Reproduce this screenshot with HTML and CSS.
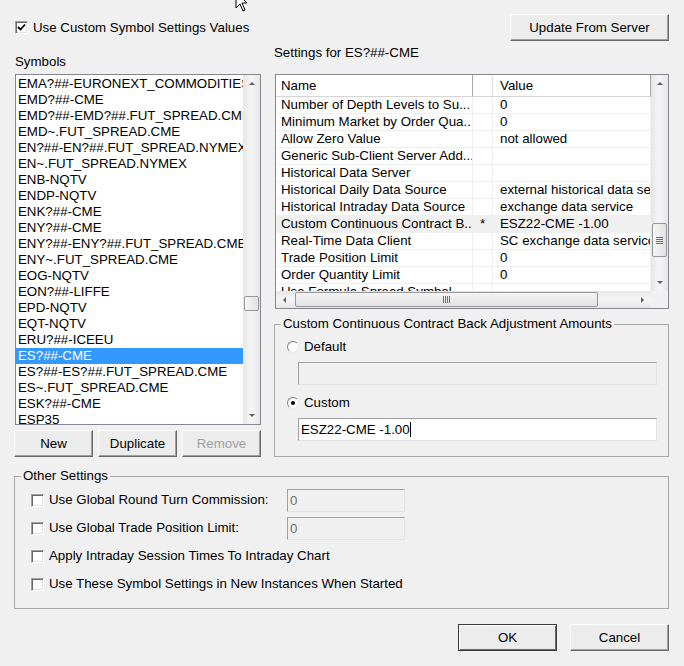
FILE: index.html
```html
<!DOCTYPE html>
<html lang="en">
<head>
    <meta charset="UTF-8">
    <title>Symbol Settings</title>
    <link rel="stylesheet" href="styles.css">
</head>
<body>
    <div class="dialog">
        <svg class="cursor" width="14" height="22" viewBox="0 0 14 22">
            <path d="M1 1 L1 17 L5 13 L8 20 L10 19 L7 12 L12 12 Z" fill="#fff" stroke="#000" stroke-width="1"/>
        </svg>

        <div class="top-row">
            <label class="check">
                <span class="box checked">
                    <svg width="9" height="9" viewBox="0 0 9 9"><path d="M1 4 L3.5 6.5 L8 1.5" fill="none" stroke="#000" stroke-width="1.8"/></svg>
                </span>
                Use Custom Symbol Settings Values
            </label>
            <button class="btn btn-update">Update From Server</button>
        </div>

        <div class="main">
            <div class="left-col">
                <div class="caption caption-symbols">Symbols</div>
                <div class="listbox">
                    <ul class="items">
                        <li>EMA?##-EURONEXT_COMMODITIES</li>
                        <li>EMD?##-CME</li>
                        <li>EMD?##-EMD?##.FUT_SPREAD.CME</li>
                        <li>EMD~.FUT_SPREAD.CME</li>
                        <li>EN?##-EN?##.FUT_SPREAD.NYMEX</li>
                        <li>EN~.FUT_SPREAD.NYMEX</li>
                        <li>ENB-NQTV</li>
                        <li>ENDP-NQTV</li>
                        <li>ENK?##-CME</li>
                        <li>ENY?##-CME</li>
                        <li>ENY?##-ENY?##.FUT_SPREAD.CME</li>
                        <li>ENY~.FUT_SPREAD.CME</li>
                        <li>EOG-NQTV</li>
                        <li>EON?##-LIFFE</li>
                        <li>EPD-NQTV</li>
                        <li>EQT-NQTV</li>
                        <li>ERU?##-ICEEU</li>
                        <li class="selected">ES?##-CME</li>
                        <li>ES?##-ES?##.FUT_SPREAD.CME</li>
                        <li>ES~.FUT_SPREAD.CME</li>
                        <li>ESK?##-CME</li>
                        <li>ESP35</li>
                    </ul>
                    <div class="vscroll">
                        <div class="sb-btn"><span class="arr-up"></span></div>
                        <div class="sb-track">
                            <div class="thumb thumb-list"></div>
                        </div>
                        <div class="sb-btn"><span class="arr-down"></span></div>
                    </div>
                </div>
                <div class="btn-row">
                    <button class="btn btn-small">New</button>
                    <button class="btn btn-small">Duplicate</button>
                    <button class="btn btn-small" disabled>Remove</button>
                </div>
            </div>

            <div class="right-col">
                <div class="caption caption-settings">Settings for ES?##-CME</div>
                <div class="grid-box">
                    <div class="grid-top">
                        <div class="grid-view">
                            <div class="grid-row grid-head">
                                <div class="cell c-name">Name</div>
                                <div class="cell c-mark"></div>
                                <div class="cell c-value">Value</div>
                            </div>
                            <div class="grid-row">
                                <div class="cell c-name">Number of Depth Levels to Su...</div>
                                <div class="cell c-mark"></div>
                                <div class="cell c-value">0</div>
                            </div>
                            <div class="grid-row">
                                <div class="cell c-name">Minimum Market by Order Qua...</div>
                                <div class="cell c-mark"></div>
                                <div class="cell c-value">0</div>
                            </div>
                            <div class="grid-row">
                                <div class="cell c-name">Allow Zero Value</div>
                                <div class="cell c-mark"></div>
                                <div class="cell c-value">not allowed</div>
                            </div>
                            <div class="grid-row">
                                <div class="cell c-name">Generic Sub-Client Server Add...</div>
                                <div class="cell c-mark"></div>
                                <div class="cell c-value"></div>
                            </div>
                            <div class="grid-row">
                                <div class="cell c-name">Historical Data Server</div>
                                <div class="cell c-mark"></div>
                                <div class="cell c-value"></div>
                            </div>
                            <div class="grid-row">
                                <div class="cell c-name">Historical Daily Data Source</div>
                                <div class="cell c-mark"></div>
                                <div class="cell c-value">external historical data service</div>
                            </div>
                            <div class="grid-row">
                                <div class="cell c-name">Historical Intraday Data Source</div>
                                <div class="cell c-mark"></div>
                                <div class="cell c-value">exchange data service</div>
                            </div>
                            <div class="grid-row current">
                                <div class="cell c-name">Custom Continuous Contract B...</div>
                                <div class="cell c-mark">*</div>
                                <div class="cell c-value">ESZ22-CME -1.00</div>
                            </div>
                            <div class="grid-row">
                                <div class="cell c-name">Real-Time Data Client</div>
                                <div class="cell c-mark"></div>
                                <div class="cell c-value">SC exchange data service</div>
                            </div>
                            <div class="grid-row">
                                <div class="cell c-name">Trade Position Limit</div>
                                <div class="cell c-mark"></div>
                                <div class="cell c-value">0</div>
                            </div>
                            <div class="grid-row">
                                <div class="cell c-name">Order Quantity Limit</div>
                                <div class="cell c-mark"></div>
                                <div class="cell c-value">0</div>
                            </div>
                            <div class="grid-row">
                                <div class="cell c-name">Use Formula Spread Symbol</div>
                                <div class="cell c-mark"></div>
                                <div class="cell c-value"></div>
                            </div>
                        </div>
                        <div class="vscroll">
                            <div class="sb-btn"><span class="arr-up"></span></div>
                            <div class="sb-track">
                                <div class="thumb thumb-grid"><span class="grip-h"></span></div>
                            </div>
                            <div class="sb-btn"><span class="arr-down"></span></div>
                        </div>
                    </div>
                    <div class="grid-bottom">
                        <div class="hscroll">
                            <div class="sb-btn"><span class="arr-left"></span></div>
                            <div class="sb-track-h">
                                <div class="thumb thumb-h"><span class="grip-v"></span></div>
                            </div>
                            <div class="sb-btn"><span class="arr-right"></span></div>
                        </div>
                        <div class="corner"></div>
                    </div>
                </div>

                <fieldset class="group group-adjust">
                    <legend>Custom Continuous Contract Back Adjustment Amounts</legend>
                    <div class="group-body">
                        <label class="radio-row first">
                            <span class="radio"></span>
                            Default
                        </label>
                        <div class="textbox wide disabled"></div>
                        <label class="radio-row">
                            <span class="radio on"></span>
                            Custom
                        </label>
                        <div class="textbox wide"><span class="caret">ESZ22-CME -1.00</span></div>
                    </div>
                </fieldset>
            </div>
        </div>

        <fieldset class="group group-other">
            <legend>Other Settings</legend>
            <div class="group-body">
                <div class="opt-row">
                    <label class="check opt-label"><span class="box"></span>Use Global Round Turn Commission:</label>
                    <div class="textbox small disabled">0</div>
                </div>
                <div class="opt-row">
                    <label class="check opt-label"><span class="box"></span>Use Global Trade Position Limit:</label>
                    <div class="textbox small disabled">0</div>
                </div>
                <div class="opt-row">
                    <label class="check opt-label"><span class="box"></span>Apply Intraday Session Times To Intraday Chart</label>
                </div>
                <div class="opt-row">
                    <label class="check opt-label"><span class="box"></span>Use These Symbol Settings in New Instances When Started</label>
                </div>
            </div>
        </fieldset>

        <div class="footer">
            <button class="btn btn-dialog btn-default">OK</button>
            <button class="btn btn-dialog">Cancel</button>
        </div>
    </div>
</body>
</html>
```

FILE: styles.css
```css
body {
    margin: 0;
    background-color: #f0f0f0;
    font-family: "Liberation Sans", Arial, sans-serif;
    font-size: 13.3px;
    color: #000;
}
.dialog {
    position: relative;
    width: 684px;
    height: 666px;
    overflow: hidden;
}
/* mouse pointer left in the screenshot */
.cursor {
    position: absolute;
    left: 235px;
    top: -9px;
}
.top-row {
    display: flex;
    justify-content: space-between;
    align-items: center;
    height: 27px;
    padding: 14px 15px 0 15px;
}
.check {
    display: flex;
    align-items: center;
    gap: 5px;
    line-height: 16px;
    white-space: nowrap;
}
.box {
    display: flex;
    align-items: center;
    justify-content: center;
    width: 13px;
    height: 13px;
    box-sizing: border-box;
    background-color: #fff;
    border: 1px solid;
    border-color: #a0a0a0 #fff #fff #a0a0a0;
    box-shadow: inset 1px 1px 0 #696969, inset -1px -1px 0 #e3e3e3;
    flex: none;
}
.btn {
    font-family: inherit;
    font-size: 13.3px;
    color: #000;
    height: 27px;
    padding: 0;
    background-color: #ececec;
    border: 1px solid;
    border-color: #fff #696969 #696969 #fff;
    box-shadow: inset -1px -1px 0 #a0a0a0;
    box-sizing: border-box;
}
.btn:disabled {
    color: #a0a0a0;
}
.btn-update {
    width: 159px;
}
.main {
    display: flex;
    gap: 13px;
    padding-left: 14px;
}
.left-col {
    width: 247px;
}
.right-col {
    width: 395px;
}
.caption {
    line-height: 16px;
    height: 16px;
}
.caption-symbols {
    padding-top: 13px;
    margin-bottom: 4px;
    padding-left: 1px;
}
.caption-settings {
    padding-top: 4px;
    margin-bottom: 13px;
}
.listbox {
    display: flex;
    margin-left: 1px;
    width: 246px;
    height: 351px;
    box-sizing: border-box;
    border: 1px solid #828790;
    background-color: #fff;
}
.items {
    list-style: none;
    margin: 0;
    padding: 1px 0 0 0;
    flex: 1;
    overflow: hidden;
}
.items li {
    height: 16px;
    line-height: 16px;
    padding-left: 2px;
    white-space: nowrap;
    overflow: hidden;
}
.items li.selected {
    background-color: #3399ff;
    color: #fff;
}
.btn-row {
    display: flex;
    gap: 5px;
    margin-top: 5px;
}
.btn-small {
    width: 79px;
}
/* scrollbars */
.vscroll {
    width: 17px;
    display: flex;
    flex-direction: column;
    background: linear-gradient(to right, #e6e6e6, #f3f3f3 40%, #f3f3f3 60%, #e6e6e6);
    flex: none;
}
.sb-btn {
    width: 17px;
    height: 17px;
    display: flex;
    align-items: center;
    justify-content: center;
    flex: none;
}
.sb-track {
    flex: 1;
}
.arr-up, .arr-down, .arr-left, .arr-right {
    width: 0;
    height: 0;
}
.arr-up {
    border-left: 3px solid transparent;
    border-right: 3px solid transparent;
    border-bottom: 3px solid #606060;
}
.arr-down {
    border-left: 3px solid transparent;
    border-right: 3px solid transparent;
    border-top: 3px solid #606060;
}
.arr-left {
    border-top: 3px solid transparent;
    border-bottom: 3px solid transparent;
    border-right: 3px solid #606060;
}
.arr-right {
    border-top: 3px solid transparent;
    border-bottom: 3px solid transparent;
    border-left: 3px solid #606060;
}
.thumb {
    box-sizing: border-box;
    border: 1px solid #979797;
    border-radius: 2px;
    display: flex;
    align-items: center;
    justify-content: center;
}
.thumb-list {
    margin: 204px 0 0 1px;
    width: 15px;
    height: 15px;
    background: linear-gradient(to right, #f5f5f5, #e2e2e2);
}
.thumb-grid {
    margin: 131px 0 0 1px;
    width: 15px;
    height: 34px;
    background: linear-gradient(to right, #f5f5f5, #e2e2e2);
}
.grip-h {
    width: 7px;
    height: 7px;
    background: repeating-linear-gradient(to bottom, #6e6e6e 0, #6e6e6e 1px, transparent 1px, transparent 2px);
}
.grip-v {
    width: 7px;
    height: 7px;
    background: repeating-linear-gradient(to right, #6e6e6e 0, #6e6e6e 1px, transparent 1px, transparent 2px);
}
/* property grid */
.grid-box {
    margin-left: 1px;
    width: 394px;
    height: 235px;
    box-sizing: border-box;
    border: 1px solid #828790;
    background-color: #fff;
    display: flex;
    flex-direction: column;
}
.grid-top {
    display: flex;
    height: 216px;
}
.grid-view {
    flex: 1;
    overflow: hidden;
}
.grid-row {
    display: grid;
    grid-template-columns: 197px 20px 1fr;
    height: 17px;
    line-height: 16px;
}
.grid-row .cell {
    box-sizing: border-box;
    border-bottom: 1px solid #f0f0f0;
    border-right: 1px solid #f0f0f0;
    white-space: nowrap;
    overflow: hidden;
}
.grid-head {
    height: 22px;
    line-height: 21px;
}
.grid-head .cell {
    border-bottom: 1px solid #d5d5d5;
    border-right: 1px solid #a8a8a8;
}
.grid-head .c-mark {
    border-right-color: #e0e0e0;
}
.c-name {
    padding-left: 5px;
}
.c-mark {
    text-align: center;
}
.c-value {
    padding-left: 7px;
}
.grid-row.current .cell {
    background-color: #f0f0f0;
}
.grid-bottom {
    display: flex;
    height: 17px;
}
.hscroll {
    flex: 1;
    display: flex;
    background: linear-gradient(to bottom, #e6e6e6, #f3f3f3 40%, #f3f3f3 60%, #e6e6e6);
}
.sb-track-h {
    flex: 1;
    display: flex;
    align-items: center;
}
.thumb-h {
    margin-left: 2px;
    width: 303px;
    height: 15px;
    background: linear-gradient(to bottom, #f5f5f5, #e2e2e2);
}
.corner {
    width: 17px;
    background-color: #f0f0f0;
}
/* group boxes */
.group {
    margin: 0;
    padding: 0;
    border: 1px solid #a9a9a9;
    box-sizing: border-box;
}
.group legend {
    padding: 0 2px;
    margin-left: 6px;
    line-height: 16px;
}
.group-adjust {
    margin-top: 7px;
    width: 395px;
}
.group-adjust .group-body {
    padding: 0 0 15px 12px;
}
.radio-row {
    display: flex;
    align-items: center;
    gap: 5px;
    line-height: 16px;
    margin-top: 10px;
}
.radio-row.first {
    margin-top: 7px;
}
.radio {
    width: 12px;
    height: 12px;
    box-sizing: border-box;
    border-radius: 50%;
    background-color: #fff;
    border: 1px solid;
    border-color: #808080 #e8e8e8 #e8e8e8 #808080;
    display: flex;
    align-items: center;
    justify-content: center;
}
.radio.on::after {
    content: "";
    width: 4px;
    height: 4px;
    border-radius: 50%;
    background-color: #000;
}
.textbox {
    height: 23px;
    line-height: 21px;
    box-sizing: border-box;
    border: 1px solid;
    border-color: #a0a0a0 #e3e3e3 #e3e3e3 #a0a0a0;
    background-color: #fff;
    padding-left: 2px;
    white-space: nowrap;
}
.textbox.wide {
    width: 359px;
    margin: 7px 0 0 11px;
}
.textbox.disabled {
    background-color: #f0f0f0;
    color: #6d6d6d;
}
.caret {
    border-right: 1px solid #000;
}
.group-other {
    margin: 11px 0 0 14px;
    width: 655px;
}
.group-other .group-body {
    padding: 2px 0 10px 16px;
}
.opt-row {
    display: flex;
    align-items: center;
    height: 28px;
}
.opt-label {
    width: 256px;
}
.textbox.small {
    width: 118px;
}
.footer {
    display: flex;
    justify-content: flex-end;
    gap: 13px;
    padding-right: 15px;
    margin-top: 15px;
}
.btn-dialog {
    width: 99px;
}
.btn-default {
    border: 1px solid #3c3c3c;
    box-shadow: inset 1px 1px 0 #fff, inset -1px -1px 0 #696969;
}
```
